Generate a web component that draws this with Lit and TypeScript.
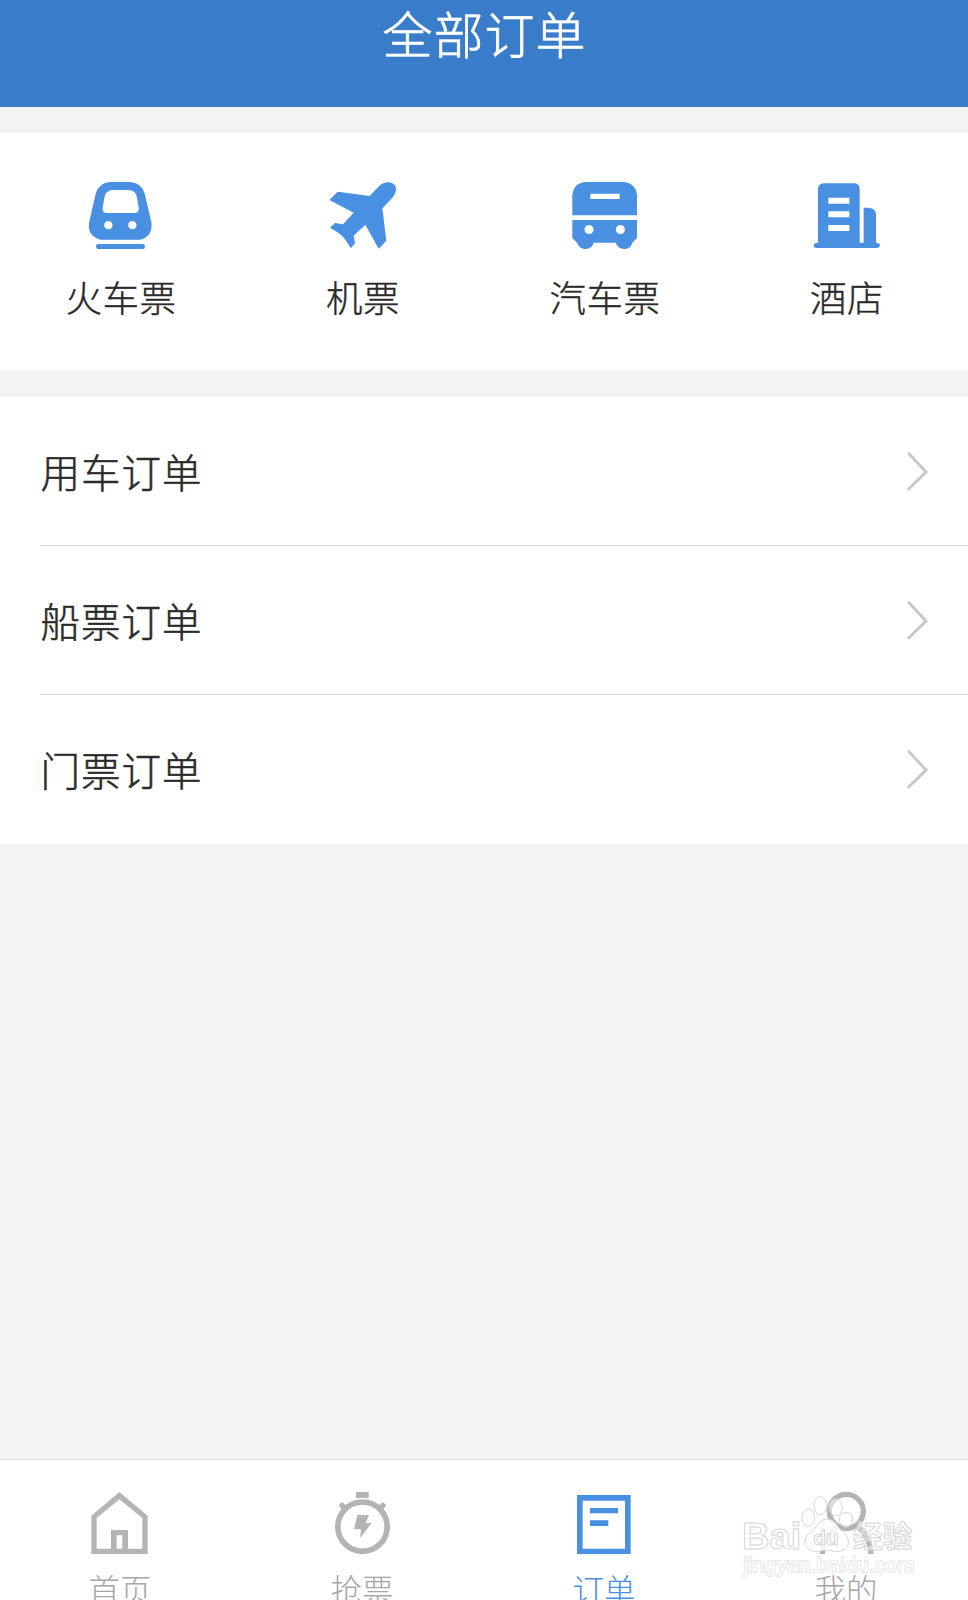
import { LitElement, html, css, svg, TemplateResult } from "lit";
import { customElement, property } from "lit/decorators.js";

const icons: Record<string, { box: string; art: TemplateResult }> = {
  train: {
    box: "105 42 216 216",
    art: svg`<path fill-rule="evenodd" fill="currentColor" d="M180 51H240Q275 53 284 86L304 170Q310 214 270 224H152Q112 214 117 174L137 86Q146 54 180 51ZM185 75Q168 77 164 94L158 128Q156 144 171 144H253Q268 144 266 128L260 94Q256 77 239 75ZM175 168a12.500 12.500 0 1 0 .1 0ZM247 168a12.500 12.500 0 1 0 .1 0Z"/><rect x="138" y="237" width="147" height="15" rx="7" fill="currentColor"/>`,
  },
  plane: {
    box: "51 42 216 216",
    art: svg`<path fill="currentColor" d="M83 80L179 93Q194 76 211 60C229 45 256 51 258 69C259 86 248 98 235 111L217 130L229 227L206 251L166 179L131 212L135 235L122 250Q112 231 98 214Q81 199 60 188L75 174L99 178L131 143L58 105Z"/>`,
  },
  bus: {
    box: "87 42 216 216",
    art: svg`<path fill-rule="evenodd" fill="currentColor" d="M97 151V91Q101 52 140 51H248Q287 53 291 91V151ZM151 86V102H239V86ZM97 165H291V219L277 233Q272 252 252 252Q233 251 227 233H161Q155 252 135 252Q117 250 111 233L97 219ZM147 180a13.500 13.500 0 1 0 .1 0ZM241 180a13.500 13.500 0 1 0 .1 0Z"/>`,
  },
  hotel: {
    box: "63 42 216 216",
    art: svg`<path fill-rule="evenodd" fill="currentColor" d="M84 233V70Q86 56 101 55H194Q208 57 209 70V233H221V128H237Q257 130 258 147V233Q270 233 270 241Q269 249 260 249H80Q71 249 71 241Q72 233 84 233ZM115 98V116H178V98ZM115 139V157H178V139ZM115 180V198H178V180Z"/>`,
  },
  chevron: {
    box: "132 267 72 132",
    art: svg`<path d="M147 281L198 336L146 387" fill="none" stroke="currentColor" stroke-width="9" stroke-linecap="round"/>`,
  },
  home: {
    box: "54 120 198 198",
    art: svg`<path fill-rule="evenodd" fill="currentColor" d="M148 126L233 197V312H64V197ZM148 148L80 204V296H123V240H174V296H217V204ZM140 256V296H157V256Z"/>`,
  },
  timer: {
    box: "60 120 198 198",
    art: svg`<circle cx="157.500" cy="230" r="74" fill="none" stroke="currentColor" stroke-width="17"/><path fill="currentColor" d="M138 126H176V144H138ZM86 166L96 156L112 169L99 184ZM229 166L219 156L203 169L216 184ZM142 195H177L167 219H185L150 265L153 238H132Z"/>`,
  },
  order: {
    box: "51 120 198 198",
    art: svg`<path fill-rule="evenodd" fill="currentColor" d="M66 135H227V312H66ZM83 152V296H210V152ZM105 174H189V190H105ZM105 211H160V228H105Z"/>`,
  },
  user: {
    box: "252 120 198 198",
    art: svg`<g fill="none" stroke="currentColor" stroke-width="16"><circle cx="349" cy="184" r="51"/><path d="M277 312Q279 266 309 239L320 230M423 312Q421 266 392 239L378 230"/></g>`,
  },
};

@customElement("app-icon")
class AppIcon extends LitElement {
  @property() name = "train";
  static styles = css`
    :host { display: block; }
    .glyph { display: block; width: 100%; height: 100%; }
  `;
  render() {
    const i = icons[this.name];
    return html`<svg class="glyph" viewBox=${i.box}>${i.art}</svg>`;
  }
}

@customElement("app-root")
class AppRoot extends LitElement {
  static styles = css`
    :host {
      display: block;
      font-family: "Noto Sans CJK SC", sans-serif;
      font-weight: 300;
      color: #2a2a2a;
    }
    .screen {
      display: flex;
      flex-direction: column;
      height: 1600px;
      position: relative;
      overflow: hidden;
      background: #f3f3f3;
    }
    .header {
      height: 107px;
      box-sizing: border-box;
      padding: 0 0 43px 1px;
      display: flex;
      align-items: center;
      justify-content: center;
      background: #397cca;
      color: #fff;
      font-size: 50px;
      letter-spacing: 1px;
      line-height: 62px;
      -webkit-text-stroke: 0.7px currentColor;
    }
    .kinds {
      margin-top: 26px;
      height: 237px;
      box-sizing: border-box;
      padding-top: 46px;
      display: grid;
      grid-template-columns: repeat(4, 1fr);
      background: #fff;
    }
    .kind { display: flex; flex-direction: column; align-items: center; }
    .kind-icon { width: 72px; height: 72px; color: #4990e2; }
    .kind-label {
      margin-top: 20px;
      font-size: 36.5px;
      letter-spacing: 0.5px;
      line-height: 52px;
      -webkit-text-stroke: 0.4px currentColor;
    }
    .list { margin-top: 27px; background: #fff; }
    .row {
      margin-left: 40px;
      height: 149px;
      box-sizing: border-box;
      padding-right: 40px;
      display: flex;
      align-items: center;
      justify-content: space-between;
      font-size: 39.5px;
      letter-spacing: 1px;
      line-height: 60px;
      border-bottom: 1px solid #dcdcdc;
      -webkit-text-stroke: 0.5px currentColor;
    }
    .row:last-child { border-bottom-color: #fff; }
    .row-label { padding-left: 0.5px; }
    .row-icon { width: 24px; height: 44px; color: #c8c8c8; }
    .nav {
      margin-top: auto;
      height: 141px;
      box-sizing: border-box;
      border-top: 1px solid #dedede;
      padding-top: 30px;
      display: grid;
      grid-template-columns: repeat(4, 1fr);
      background: #fff;
    }
    .tab { display: flex; flex-direction: column; align-items: center; color: #b4b4b4; }
    .tab.active { color: #4990e2; }
    .tab-icon { width: 66px; height: 66px; }
    .tab-label {
      margin-top: 9px;
      padding-right: 2px;
      font-size: 31.5px;
      line-height: 46px;
      color: #a6a6a6;
    }
    .active .tab-label { color: #4990e2; }
    .mark { position: absolute; left: 730px; top: 1490px; width: 200px; height: 100px; }
    .mark-text { font-family: "Liberation Sans", "Noto Sans CJK SC", sans-serif; }
    .mark-bold { font-weight: 700; }
  `;

  render() {
    const kinds = [["train", "火车票"], ["plane", "机票"], ["bus", "汽车票"], ["hotel", "酒店"]];
    const rows = ["用车订单", "船票订单", "门票订单"];
    const tabs = [["home", "首页"], ["timer", "抢票"], ["order", "订单"], ["user", "我的"]];
    return html`
      <div class="screen">
        <header class="header">全部订单</header>
        <section class="kinds">
          ${kinds.map(([i, t]) => html`<div class="kind"><app-icon class="kind-icon" name=${i}></app-icon><span class="kind-label">${t}</span></div>`)}
        </section>
        <section class="list">
          ${rows.map((t) => html`<div class="row"><span class="row-label">${t}</span><app-icon class="row-icon" name="chevron"></app-icon></div>`)}
        </section>
        <nav class="nav">
          ${tabs.map(([i, t]) => html`<div class="tab ${i === "order" ? "active" : ""}"><app-icon class="tab-icon" name=${i}></app-icon><span class="tab-label">${t}</span></div>`)}
        </nav>
        <svg class="mark" viewBox="0 120 600 300">
          <g class="mark-text" fill="#fff" fill-opacity=".5" stroke="#d6d6d6" stroke-width="3">
            <g class="mark-bold">
              <text x="36" y="298" font-size="112" textLength="178" lengthAdjust="spacingAndGlyphs">Bai</text>
              <text x="370" y="292" font-size="88" textLength="177" lengthAdjust="spacingAndGlyphs">经验</text>
            </g>
            <ellipse cx="235" cy="203" rx="19" ry="26"/>
            <ellipse cx="271" cy="167" rx="19" ry="27"/>
            <ellipse cx="317" cy="172" rx="20" ry="26"/>
            <ellipse cx="348" cy="209" rx="20" ry="22"/>
            <path fill-opacity=".85" d="M291 207C315 207 320 231 340 246C359 261 361 291 341 300C322 309 309 301 290 301C271 301 261 309 241 301C217 290 222 260 241 247C261 232 267 207 291 207Z"/>
            <text class="mark-bold" x="250" y="286" font-size="58" textLength="76" lengthAdjust="spacingAndGlyphs">du</text>
            <text x="40" y="367" font-size="58" textLength="514" lengthAdjust="spacingAndGlyphs" stroke="#dedede" stroke-width="4" paint-order="stroke" fill-opacity="1">jingyan.baidu.com</text>
          </g>
        </svg>
      </div>
    `;
  }
}
